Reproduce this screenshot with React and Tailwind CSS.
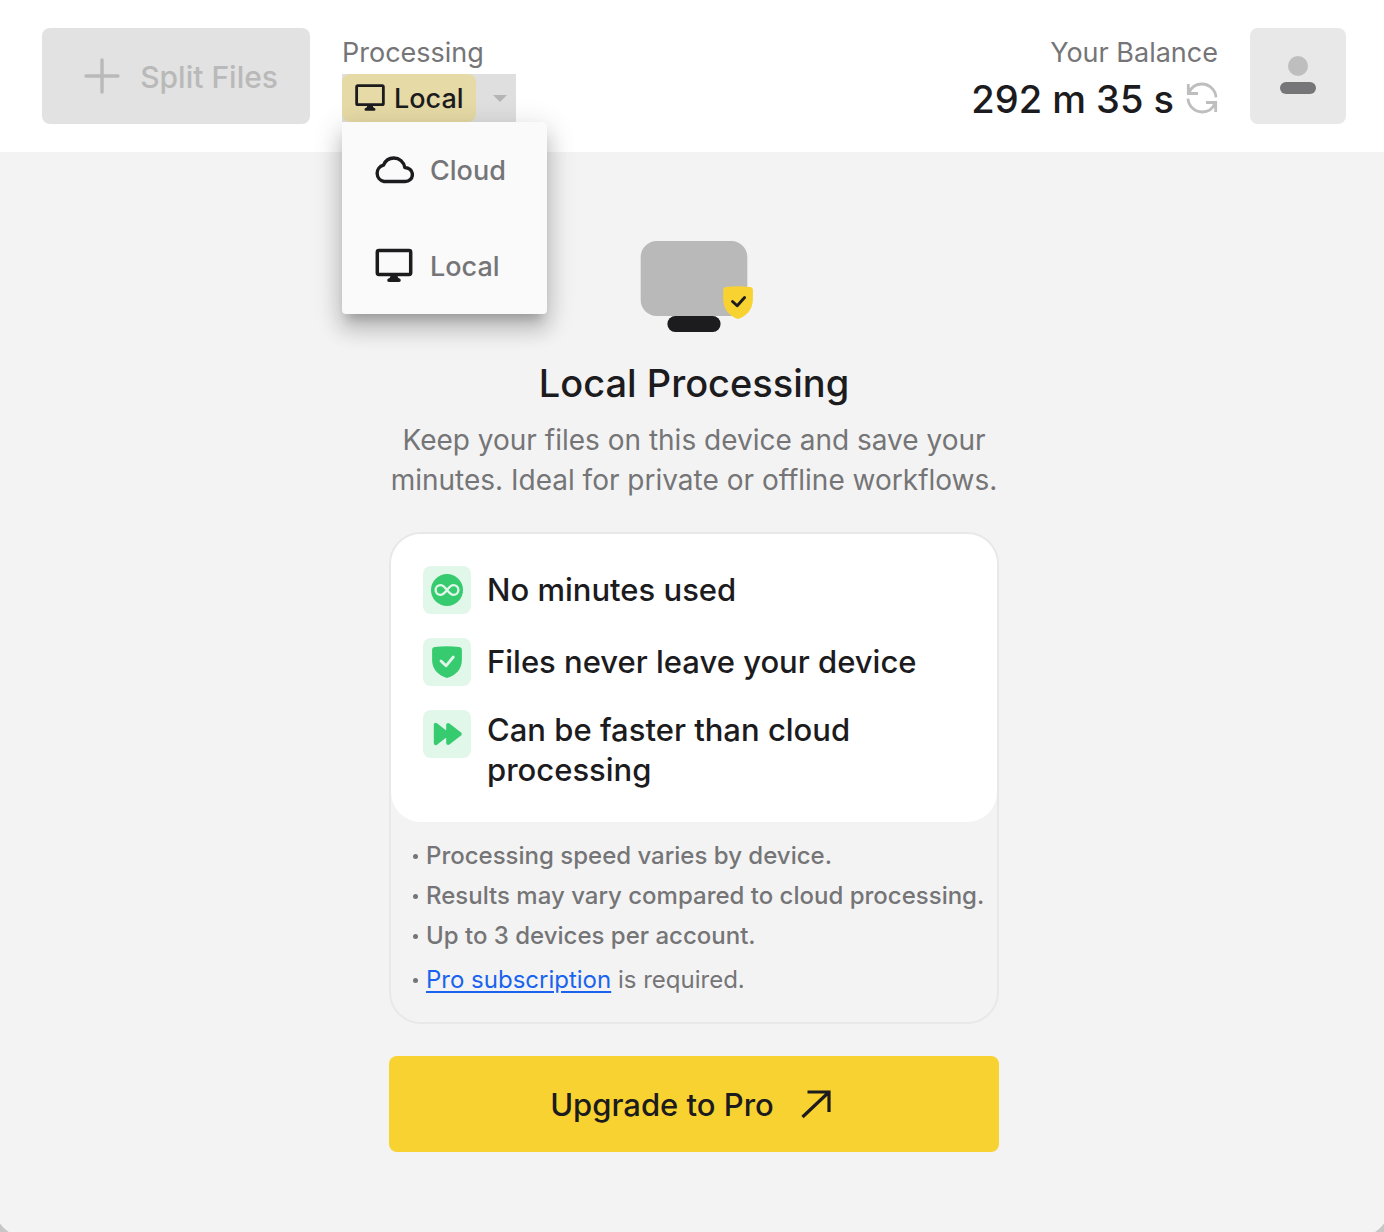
import { useState } from 'react'

const MODES = [
  { id: 'cloud', label: 'Cloud', Icon: CloudIcon },
  { id: 'local', label: 'Local', Icon: MonitorIcon }
]

const FEATURES = [
  { id: 'minutes', text: 'No minutes used', Icon: InfinityIcon },
  { id: 'private', text: 'Files never leave your device', Icon: ShieldIcon },
  { id: 'fast', text: 'Can be faster than cloud processing', Icon: ForwardIcon }
]

const NOTES = [
  'Processing speed varies by device.',
  'Results may vary compared to cloud processing.',
  'Up to 3 devices per account.'
]

function MonitorIcon({ className }) {
  return (
    <svg viewBox="0 0 40 36" className={className} fill="none" aria-hidden="true">
      <rect x="3.3" y="2.6" width="33.4" height="23.8" rx="1.6" stroke="currentColor" strokeWidth="3.5" />
      <path d="M16.2 27h7.6q-.6 2.200.6 3l1.200.5q1.200.4 1.200 1.800q0 1.700-1.700 1.700H14.900q-1.700 0-1.700-1.700q0-1.400 1.200-1.800l1.200-.5q1.200-.8.6-3z" fill="currentColor" />
    </svg>
  )
}

function CloudIcon({ className }) {
  return (
    <svg viewBox="0 0 40 36" className={className} fill="none" aria-hidden="true">
      <path
        d="M10 29.500a8.400 8.400 0 0 1-.5-16.400C11.300 8.700 15.300 6 19.800 6c5.600 0 10.200 4 11 9.500c4.200.1 7.600 3.200 7.600 7c0 4-3.200 7-7.200 7z"
        stroke="currentColor"
        strokeWidth="3.4"
        strokeLinejoin="round"
      />
    </svg>
  )
}

function PlusIcon() {
  return (
    <svg viewBox="0 0 36 36" className="size-9" fill="none" stroke="currentColor" strokeWidth="3.4" strokeLinecap="round" aria-hidden="true">
      <path d="M18 2v32M2 18h32" />
    </svg>
  )
}

function RefreshIcon() {
  return (
    <svg viewBox="0 0 32 32" className="size-8" fill="none" stroke="currentColor" strokeWidth="2.800" aria-hidden="true">
      <path d="M2.300 2v9.500H12M3 10.700C5.200 5.400 10 2 15.800 2C23.500 2 29.600 8 30 15.300" />
      <path d="M29.700 30v-9.500H20M29 21.300C26.800 26.600 22 30 16.200 30C8.500 30 2.400 24 2 16.700" />
    </svg>
  )
}

function InfinityIcon() {
  return (
    <svg viewBox="0 0 48 48" className="size-12" fill="none" aria-hidden="true">
      <circle cx="24" cy="24" r="16" fill="#37cb70" />
      <path
        d="M24 24c-2.300-3-4.200-4.900-6.500-4.900a4.900 4.900 0 0 0 0 9.800c2.300 0 4.200-1.900 6.500-4.900s4.200-4.900 6.500-4.900a4.900 4.900 0 0 1 0 9.800c-2.300 0-4.200-1.900-6.500-4.900z"
        stroke="#e1f7e9"
        strokeWidth="2.400"
      />
    </svg>
  )
}

function ShieldIcon() {
  return (
    <svg viewBox="0 0 48 48" className="size-12" fill="none" aria-hidden="true">
      <path d="M12 9q-2.900.4-2.900 3v9.500C9.100 31 14.500 37 24 40c9.500-3 14.900-9 14.900-18.500V12q0-2.600-2.900-3q-12-1.600-24 0z" fill="#37cb70" />
      <path d="M18 23l5 4.800 7.300-8.800" stroke="#e1f7e9" strokeWidth="2.800" strokeLinecap="round" strokeLinejoin="round" />
    </svg>
  )
}

function ForwardIcon() {
  return (
    <svg viewBox="0 0 48 48" className="size-12" fill="#37cb70" stroke="#37cb70" strokeWidth="4" strokeLinejoin="round" aria-hidden="true">
      <path d="M12.800 14.800v18.400L24.500 24zM25.200 15v18L36.800 24z" />
    </svg>
  )
}

function UserIcon() {
  return (
    <svg viewBox="0 0 36 40" className="h-10 w-9" aria-hidden="true">
      <circle cx="18" cy="10" r="10" fill="#bebebe" />
      <rect y="26" width="36" height="12" rx="6" fill="#767678" />
    </svg>
  )
}

function LocalIllustration() {
  return (
    <svg viewBox="0 0 120 96" className="h-24 w-[120px]" fill="none" aria-hidden="true">
      <rect x="6.700" y="1" width="106.600" height="75" rx="16" fill="#b9b9b9" />
      <rect x="33.400" y="76" width="53.200" height="16" rx="8" fill="#1c1b1e" />
      <path d="M92 47q-2.800.4-2.800 3v9C89.200 69 95 76 104 79c9-3 14.900-10 14.900-20v-9q0-2.600-2.900-3q-12-1.600-24 0z" fill="#f8d231" />
      <path d="M98.500 61.500l4.700 4.300 7.400-8.300" stroke="#1c1b1e" strokeWidth="2.900" strokeLinecap="round" strokeLinejoin="round" />
    </svg>
  )
}

function ModePicker({ mode, onChange }) {
  const [open, setOpen] = useState(true)
  const current = MODES.find((m) => m.id === mode)

  return (
    <div className="relative">
      <div id="mode-label" className="h-[46px] pt-[5px] text-[27px] leading-10 text-[#757577]">
        Processing
      </div>
      <button
        type="button"
        aria-haspopup="listbox"
        aria-expanded={open}
        aria-labelledby="mode-label mode-value"
        onClick={() => setOpen(!open)}
        className="flex h-12 items-center bg-[#dfdfdf]"
      >
        <span id="mode-value" className="flex h-12 items-center gap-2 rounded-lg bg-[#e6daa6] px-3 text-[27px] font-medium">
          <current.Icon className="h-8 w-8" />
          <span className="pt-0.5">{current.label}</span>
        </span>
        <span className="flex w-10 justify-center pl-2">
          <svg viewBox="0 0 14 7" className="h-[7px] w-3.5" fill="#b5b5b5" aria-hidden="true">
            <path d="M0 0h14L7 7z" />
          </svg>
        </span>
      </button>
      {open ? (
        <ul
          role="listbox"
          aria-labelledby="mode-label"
          className="absolute top-full left-0 z-10 w-[205px] rounded-sm bg-[#fafafa] shadow-[0_10px_10px_-6px_rgba(0,0,0,0.2),0_16px_20px_2px_rgba(0,0,0,0.14),0_6px_28px_4px_rgba(0,0,0,0.12)]"
        >
          {MODES.map(({ id, label, Icon }) => (
            <li key={id} role="option" aria-selected={id === mode}>
              <button
                type="button"
                onClick={() => {
                  onChange(id)
                  setOpen(false)
                }}
                className="flex h-24 w-full items-center gap-4 px-8 text-[27px] font-medium text-[#757577]"
              >
                <Icon className="h-9 w-10 text-[#1c1b1e]" />
                <span className="pt-0.5">{label}</span>
              </button>
            </li>
          ))}
        </ul>
      ) : null}
    </div>
  )
}

function Header({ mode, onModeChange }) {
  return (
    <header className="flex items-start gap-8 bg-white py-7 pr-[38px] pl-[42px]">
      <button type="button" disabled className="flex h-24 w-[268px] items-center justify-end gap-5 rounded-lg bg-[#e2e2e2] pr-8 text-[30px] font-medium text-[#b9b9b9]">
        <PlusIcon />
        <span className="pt-0.5">Split Files</span>
      </button>
      <ModePicker mode={mode} onChange={onModeChange} />
      <div className="ml-auto text-right">
        <div className="h-[46px] pt-[5px] text-[27px] leading-10 text-[#757577]">Your Balance</div>
        <div className="flex h-12 items-center justify-end gap-3 text-[38px] font-medium">
          <span className="pt-0.5">292 m 35 s</span>
          <button type="button" aria-label="Refresh balance" className="text-[#bebebe]">
            <RefreshIcon />
          </button>
        </div>
      </div>
      <button type="button" aria-label="Account" className="flex size-24 items-center justify-center rounded-lg bg-[#e8e8e8]">
        <UserIcon />
      </button>
    </header>
  )
}

function DetailsCard() {
  return (
    <section className="mt-8 w-full rounded-4xl border-2 border-[#e8e8e8]">
      <ul className="flex flex-col gap-6 rounded-[30px] bg-white p-8">
        {FEATURES.map(({ id, text, Icon }) => (
          <li key={id} className="flex items-start gap-4">
            <span className="shrink-0 rounded-lg bg-[#e1f7e9]">
              <Icon />
            </span>
            <span className="flex min-h-12 max-w-[430px] items-center text-[31px] leading-10 font-medium">{text}</span>
          </li>
        ))}
      </ul>
      <ul className="pt-3.5 pr-2 pb-[22px] pl-[22px] text-[24px] leading-10 text-[#757577]">
        {NOTES.map((note) => (
          <li key={note} className="flex items-center gap-2 font-medium">
            <span className="size-[5px] shrink-0 rounded-full bg-[#757577]" />
            {note}
          </li>
        ))}
        <li className="mt-1 flex items-center gap-2">
          <span className="size-[5px] shrink-0 rounded-full bg-[#757577]" />
          <span>
            <a href="#pro" className="text-[#1a63ee] underline underline-offset-3">
              Pro subscription
            </a>{' '}
            is required.
          </span>
        </li>
      </ul>
    </section>
  )
}

export default function App() {
  const [mode, setMode] = useState('local')

  return (
    <div className="flex min-h-screen flex-col overflow-hidden bg-[#c6c6c6] font-['Inter',sans-serif] text-[#1c1b1e]">
      <div className="-mx-1 -mb-1 flex grow flex-col overflow-hidden rounded-b-[27px] bg-[#f3f3f3] px-1 pb-1">
        <Header mode={mode} onModeChange={setMode} />
        <main className="ml-1 flex flex-col items-center px-4 pt-22 pb-20">
          <div className="flex w-full max-w-[610px] flex-col items-center">
            <LocalIllustration />
            <h1 className="mt-[23px] text-[38px] leading-12 font-medium">Local Processing</h1>
            <p className="mt-[13px] text-center text-[28px] leading-10 text-[#757577]">
              Keep your files on this device and save your minutes. Ideal for private or offline workflows.
            </p>
            <DetailsCard />
            <a href="#upgrade" className="mt-8 flex h-24 w-full items-center justify-center gap-6 rounded-lg bg-[#f8d231] text-[31px] font-medium">
              <span className="pt-0.5">Upgrade to Pro</span>
              <svg viewBox="-3 -5 40 40" className="size-10" fill="none" stroke="currentColor" strokeWidth="3.200" aria-hidden="true">
                <path d="M6.500 3H28v20M27.500 3.500L1.500 28" />
              </svg>
            </a>
          </div>
        </main>
      </div>
    </div>
  )
}
